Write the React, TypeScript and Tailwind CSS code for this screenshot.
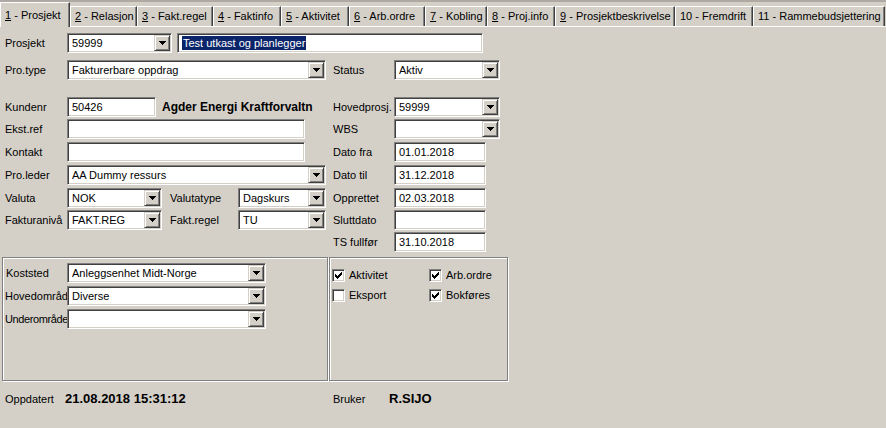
import React from 'react';

// classic 3D bevels
const sunken =
  'border border-t-[#808080] border-l-[#808080] border-b-white border-r-white shadow-[inset_1px_1px_0_#404040,inset_-1px_-1px_0_#d4d0c8]';
const raised =
  'border border-t-[#d4d0c8] border-l-[#d4d0c8] border-b-[#404040] border-r-[#404040] shadow-[inset_1px_1px_0_#fff,inset_-1px_-1px_0_#808080]';

const tabs: { key: string; label: string; w: string; ul: boolean }[] = [
  { key: '1', label: ' - Prosjekt', w: 'w-[70px]', ul: true },
  { key: '2', label: ' - Relasjon', w: 'w-[67px]', ul: true },
  { key: '3', label: ' - Fakt.regel', w: 'w-[76px]', ul: true },
  { key: '4', label: ' - Faktinfo', w: 'w-[68px]', ul: true },
  { key: '5', label: ' - Aktivitet', w: 'w-[68px]', ul: true },
  { key: '6', label: ' - Arb.ordre', w: 'w-[76px]', ul: true },
  { key: '7', label: ' - Kobling', w: 'w-[62px]', ul: true },
  { key: '8', label: ' - Proj.info', w: 'w-[68px]', ul: true },
  { key: '9', label: ' - Prosjektbeskrivelse', w: 'w-[120px]', ul: true },
  { key: '10', label: ' - Fremdrift', w: 'w-[78px]', ul: false },
  { key: '11', label: ' - Rammebudsjettering', w: 'w-[132px]', ul: false },
];

const Arrow = () => (
  <svg width="7" height="4" viewBox="0 0 7 4" shapeRendering="crispEdges">
    <rect x="0" y="0" width="7" height="1" fill="#000" />
    <rect x="1" y="1" width="5" height="1" fill="#000" />
    <rect x="2" y="2" width="3" height="1" fill="#000" />
    <rect x="3" y="3" width="1" height="1" fill="#000" />
  </svg>
);

interface FieldProps {
  w: string;
  value?: string;
  combo?: boolean;
  selected?: boolean;
}

const Field = ({ w, value = '', combo = false, selected = false }: FieldProps) => (
  <div className={`${sunken} ${w} box-border flex h-[20px] shrink-0 items-stretch bg-white p-px`}>
    <div className="flex min-w-0 flex-1 items-center overflow-hidden whitespace-nowrap pl-[3px] text-[11px] text-black">
      {selected ? <span className="bg-[#0a246a] px-px leading-[14px] text-white">{value}</span> : value}
    </div>
    {combo && (
      <div className={`${raised} box-border flex w-[16px] shrink-0 items-center justify-center bg-[#d4d0c8]`}>
        <Arrow />
      </div>
    )}
  </div>
);

const Label = ({ w, children }: { w: string; children: React.ReactNode }) => (
  <div className={`${w} shrink-0 overflow-hidden whitespace-nowrap text-[11px] text-black`}>{children}</div>
);

const Check = ({ checked, label, w }: { checked: boolean; label: string; w: string }) => (
  <div className={`${w} flex h-[13px] shrink-0 items-center`}>
    <div className={`${sunken} box-border flex h-[13px] w-[13px] items-center justify-center bg-white`}>
      {checked && (
        <svg width="7" height="7" viewBox="0 0 7 7" shapeRendering="crispEdges">
          <rect x="0" y="2" width="1" height="3" fill="#000" />
          <rect x="1" y="3" width="1" height="3" fill="#000" />
          <rect x="2" y="4" width="1" height="3" fill="#000" />
          <rect x="3" y="3" width="1" height="3" fill="#000" />
          <rect x="4" y="2" width="1" height="3" fill="#000" />
          <rect x="5" y="1" width="1" height="3" fill="#000" />
          <rect x="6" y="0" width="1" height="3" fill="#000" />
        </svg>
      )}
    </div>
    <span className="ml-[4px] text-[11px] text-black">{label}</span>
  </div>
);

export default function App() {
  return (
    <div className="h-[428px] w-[886px] overflow-hidden bg-[#d4d0c8] font-['Liberation_Sans',Arial,sans-serif] text-[11px] text-black">
      <div className="h-[2px] bg-[#aeaaa3]" />

      {/* Tabs */}
      <div className="flex h-[24px] items-end">
        {tabs.map((t, i) => (
          <div
            key={t.key}
            className={`${t.w} flex shrink-0 items-center border-l border-t border-l-white border-t-white border-r border-r-[#404040] pl-[4px] shadow-[inset_-1px_0_0_#808080] whitespace-nowrap text-[11px] ${
              i === 0 ? 'relative z-10 -mb-px h-[25px] bg-[#d4d0c8]' : 'h-[20px]'
            }`}
          >
            <span className="whitespace-pre">
              {t.ul ? <span className="underline">{t.key}</span> : t.key}
              {t.label}
            </span>
          </div>
        ))}
      </div>

      {/* Panel */}
      <div className="border-t border-t-white">
        <div className="flex flex-col pt-[6px]">
          {/* row 1 */}
          <div className="flex h-[20px] items-center">
            <Label w="w-[67px] pl-[5px]">Prosjekt</Label>
            <Field w="w-[105px]" value="59999" combo />
            <div className="ml-[5px]">
              <Field w="w-[306px]" value="Test utkast og planlegger" selected />
            </div>
          </div>

          {/* row 2 */}
          <div className="mt-[7px] flex h-[20px] items-center">
            <div className="flex w-[333px] items-center">
              <Label w="w-[67px] pl-[5px]">Pro.type</Label>
              <Field w="w-[259px]" value="Fakturerbare oppdrag" combo />
            </div>
            <Label w="w-[61px]">Status</Label>
            <Field w="w-[106px]" value="Aktiv" combo />
          </div>

          {/* row 3 */}
          <div className="mt-[17px] flex h-[20px] items-center">
            <div className="flex w-[333px] items-center">
              <Label w="w-[67px] pl-[5px]">Kundenr</Label>
              <Field w="w-[89px]" value="50426" />
              <span className="ml-[6px] whitespace-nowrap text-[12px] font-bold">Agder Energi Kraftforvaltn</span>
            </div>
            <Label w="w-[61px]">Hovedprosj.</Label>
            <Field w="w-[106px]" value="59999" combo />
          </div>

          {/* row 4 */}
          <div className="mt-[2px] flex h-[20px] items-center">
            <div className="flex w-[333px] items-center">
              <Label w="w-[67px] pl-[5px]">Ekst.ref</Label>
              <Field w="w-[238px]" />
            </div>
            <Label w="w-[61px]">WBS</Label>
            <Field w="w-[106px]" combo />
          </div>

          {/* row 5 */}
          <div className="mt-[3px] flex h-[20px] items-center">
            <div className="flex w-[333px] items-center">
              <Label w="w-[67px] pl-[5px]">Kontakt</Label>
              <Field w="w-[238px]" />
            </div>
            <Label w="w-[61px]">Dato fra</Label>
            <Field w="w-[92px]" value="01.01.2018" />
          </div>

          {/* row 6 */}
          <div className="mt-[3px] flex h-[20px] items-center">
            <div className="flex w-[333px] items-center">
              <Label w="w-[67px] pl-[5px]">Pro.leder</Label>
              <Field w="w-[259px]" value="AA Dummy ressurs" combo />
            </div>
            <Label w="w-[61px]">Dato til</Label>
            <Field w="w-[92px]" value="31.12.2018" />
          </div>

          {/* row 7 */}
          <div className="mt-[3px] flex h-[20px] items-center">
            <div className="flex w-[333px] items-center">
              <Label w="w-[67px] pl-[5px]">Valuta</Label>
              <Field w="w-[95px]" value="NOK" combo />
              <Label w="w-[76px] pl-[8px]">Valutatype</Label>
              <Field w="w-[88px]" value="Dagskurs" combo />
            </div>
            <Label w="w-[61px]">Opprettet</Label>
            <Field w="w-[92px]" value="02.03.2018" />
          </div>

          {/* row 8 */}
          <div className="mt-[2px] flex h-[20px] items-center">
            <div className="flex w-[333px] items-center">
              <Label w="w-[67px] pl-[5px]">Fakturanivå</Label>
              <Field w="w-[95px]" value="FAKT.REG" combo />
              <Label w="w-[76px] pl-[8px]">Fakt.regel</Label>
              <Field w="w-[88px]" value="TU" combo />
            </div>
            <Label w="w-[61px]">Sluttdato</Label>
            <Field w="w-[92px]" />
          </div>

          {/* row 9 */}
          <div className="mt-[2px] flex h-[20px] items-center">
            <div className="w-[333px]" />
            <Label w="w-[61px]">TS fullfør</Label>
            <Field w="w-[92px]" value="31.10.2018" />
          </div>

          {/* group boxes */}
          <div className="mt-[5px] flex gap-[1px] pl-[2px]">
            <div className="box-border h-[124px] w-[326px] border border-[#808080] pt-[5px] shadow-[inset_1px_1px_0_#fff,1px_1px_0_#fff]">
              <div className="flex flex-col gap-[3px]">
                <div className="flex h-[20px] items-center">
                  <Label w="w-[64px] pl-[3px]">Koststed</Label>
                  <Field w="w-[199px]" value="Anleggsenhet Midt-Norge" combo />
                </div>
                <div className="flex h-[20px] items-center">
                  <Label w="w-[64px] pl-[2px]">Hovedområd</Label>
                  <Field w="w-[199px]" value="Diverse" combo />
                </div>
                <div className="flex h-[20px] items-center">
                  <Label w="w-[64px] pl-[2px] tracking-[-0.4px]">Underområde</Label>
                  <Field w="w-[199px]" combo />
                </div>
              </div>
            </div>
            <div className="box-border h-[124px] w-[179px] border border-[#808080] pl-[2px] pt-[11px] shadow-[inset_1px_1px_0_#fff,1px_1px_0_#fff]">
              <div className="flex flex-col gap-[7px]">
                <div className="flex">
                  <Check w="w-[97px]" checked label="Aktivitet" />
                  <Check w="w-[70px]" checked label="Arb.ordre" />
                </div>
                <div className="flex">
                  <Check w="w-[97px]" checked={false} label="Eksport" />
                  <Check w="w-[70px]" checked label="Bokføres" />
                </div>
              </div>
            </div>
          </div>

          {/* footer */}
          <div className="mt-[10px] flex h-[16px] items-center">
            <div className="flex w-[333px] items-center">
              <Label w="w-[65px] pl-[5px]">Oppdatert</Label>
              <span className="whitespace-nowrap text-[13px] font-bold">21.08.2018 15:31:12</span>
            </div>
            <Label w="w-[56px]">Bruker</Label>
            <span className="text-[13px] font-bold">R.SIJO</span>
          </div>
        </div>
      </div>
    </div>
  );
}
